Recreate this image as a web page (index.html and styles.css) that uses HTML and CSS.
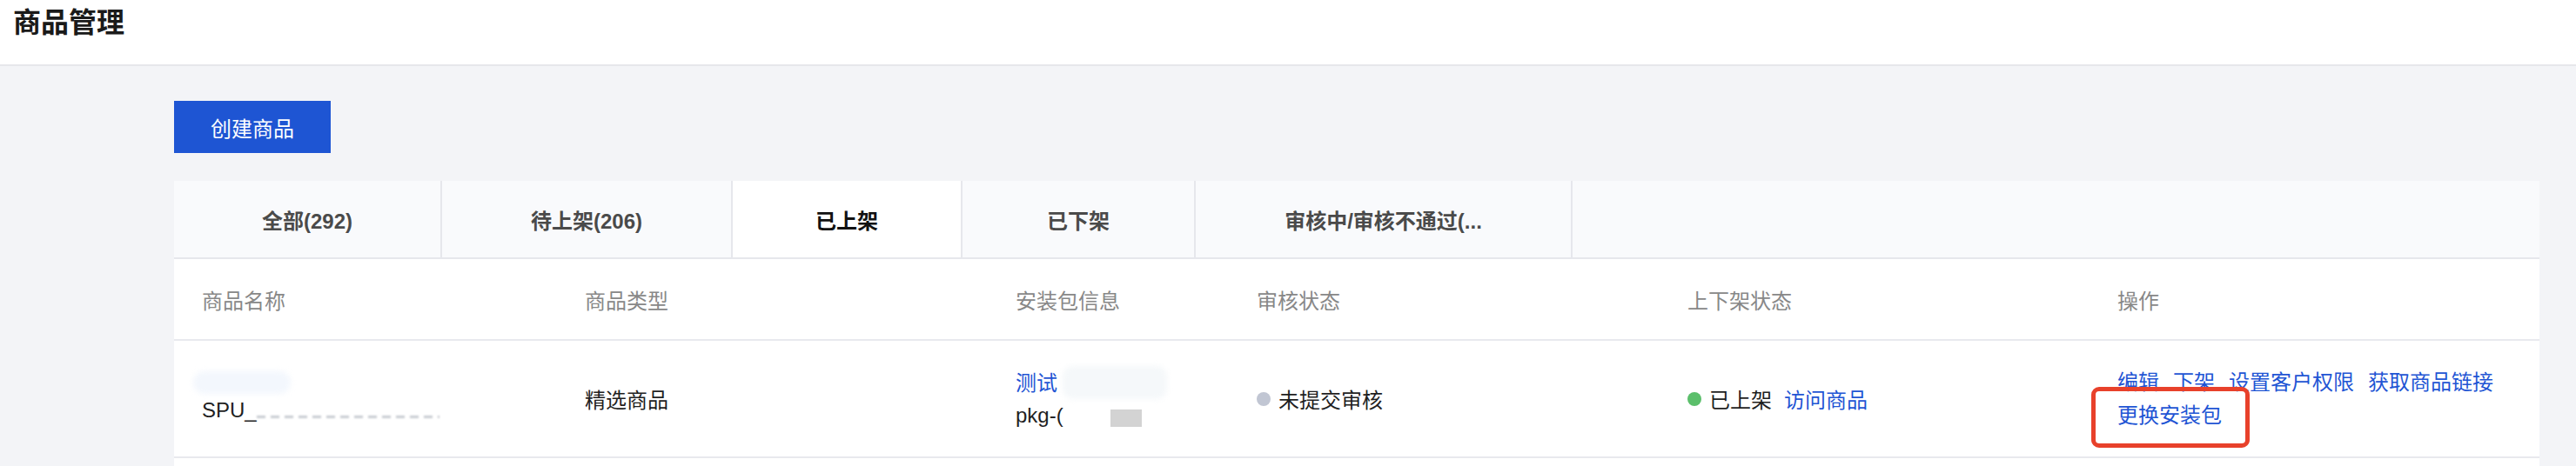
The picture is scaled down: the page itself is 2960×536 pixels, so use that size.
FILE: index.html
```html
<!DOCTYPE html>
<html lang="zh-CN">
<head>
  <meta charset="UTF-8">
  <title>商品管理</title>
  <link rel="stylesheet" href="styles.css">
</head>
<body>
  <header class="page-header">
    <h1>商品管理</h1>
  </header>

  <main class="content">
    <button class="btn-primary">创建商品</button>

    <div class="panel">
      <div class="tabs">
        <div class="tab">全部(292)</div>
        <div class="tab">待上架(206)</div>
        <div class="tab active">已上架</div>
        <div class="tab">已下架</div>
        <div class="tab">审核中/审核不通过(...</div>
        <div class="tab-fill"></div>
      </div>

      <div class="table">
        <div class="row head">
          <div class="cell">商品名称</div>
          <div class="cell">商品类型</div>
          <div class="cell">安装包信息</div>
          <div class="cell">审核状态</div>
          <div class="cell">上下架状态</div>
          <div class="cell">操作</div>
        </div>

        <div class="row">
          <div class="cell stack">
            <span class="line"><span class="blur blur-name"></span></span>
            <span class="line">SPU_<span class="blur blur-code"></span></span>
          </div>
          <div class="cell">精选商品</div>
          <div class="cell stack">
            <span class="line"><a class="link">测试</a><span class="blur blur-pkg"></span></span>
            <span class="line">pkg-(<span class="blur blur-id"></span></span>
          </div>
          <div class="cell">
            <span class="dot gray"></span>未提交审核
          </div>
          <div class="cell">
            <span class="dot green"></span>已上架<a class="link visit">访问商品</a>
          </div>
          <div class="cell ops">
            <a class="link">编辑</a>
            <a class="link">下架</a>
            <a class="link">设置客户权限</a>
            <a class="link">获取商品链接</a>
            <a class="link marked">更换安装包<span class="mark"></span></a>
          </div>
        </div>

        <div class="row filler"></div>
      </div>
    </div>
  </main>
</body>
</html>
```

FILE: styles.css
```css
body {
  margin: 0;
  font-family: "Liberation Sans", "Noto Sans CJK SC", sans-serif;
  background-color: #f3f4f7;
  color: #1f1f1f;
}

.page-header {
  height: 68px;
  padding: 6px 15px 0;
  background-color: #fff;
  border-bottom: 2px solid #e6e7eb;
}

.page-header h1 {
  margin: 0;
  font-size: 32px;
  line-height: 40px;
  font-weight: 700;
  color: #1a1a1a;
}

.content {
  padding: 40px 42px 0 200px;
}

.btn-primary {
  display: block;
  width: 180px;
  height: 60px;
  border: none;
  background-color: #1e55d3;
  color: #fff;
  font-family: inherit;
  font-size: 24px;
  cursor: pointer;
}

.panel {
  margin-top: 32px;
  background-color: #fff;
}

.tabs {
  display: grid;
  grid-template-columns: 306px 332px 262px 266px 431px 1fr;
  gap: 2px;
  background-color: #e6e7ec;
  border-bottom: 2px solid #e6e7ec;
}

.tab,
.tab-fill {
  height: 88px;
  background-color: #f9fafc;
}

.tab {
  display: flex;
  align-items: center;
  justify-content: center;
  font-size: 24px;
  font-weight: 600;
  color: #4a4a4a;
}

.tab.active {
  background-color: #fff;
  color: #111;
}

.row {
  display: grid;
  grid-template-columns: 440px 495px 277px 495px 494px 1fr;
  height: 133px;
  border-bottom: 2px solid #e8e9ee;
  font-size: 24px;
}

.row.head {
  height: 92px;
  color: #888;
}

.row.filler {
  height: 20px;
  border-bottom: none;
}

.cell {
  display: flex;
  align-items: center;
  padding-left: 32px;
  padding-right: 16px;
}

.stack {
  flex-direction: column;
  align-items: flex-start;
  justify-content: center;
}

.line {
  display: flex;
  align-items: center;
  line-height: 37px;
}

.link {
  color: #1f55d4;
  text-decoration: none;
  cursor: pointer;
}

.visit {
  margin-left: 14px;
}

.dot {
  width: 16px;
  height: 16px;
  border-radius: 50%;
  margin-right: 9px;
}

.dot.gray {
  background-color: #c1c6d3;
}

.dot.green {
  background-color: #5bbf6b;
}

/* masked values in the screenshot */
.blur {
  display: inline-block;
  filter: blur(3px);
}

.blur-name {
  width: 112px;
  height: 26px;
  margin-left: -10px;
  border-radius: 13px;
  background-color: #f3f7fd;
}

.blur-code {
  width: 210px;
  height: 3px;
  margin-top: 16px;
  background-image: repeating-linear-gradient(90deg, #c9ccd2 0 10px, transparent 10px 16px);
  filter: blur(1px);
}

.blur-pkg {
  width: 120px;
  height: 38px;
  margin-left: 6px;
  border-radius: 12px;
  background-color: #f5f8fa;
}

.blur-id {
  width: 36px;
  height: 20px;
  margin-left: 54px;
  margin-top: 6px;
  background-color: #d3d3d3;
  filter: none;
}

.ops {
  flex-wrap: wrap;
  align-content: center;
  column-gap: 16px;
  line-height: 38px;
}

.marked {
  position: relative;
}

/* red annotation frame drawn over the screenshot */
.mark {
  position: absolute;
  left: -30px;
  right: -32px;
  top: -14px;
  bottom: -18px;
  border: 5px solid #e8412b;
  border-radius: 9px;
}
```
